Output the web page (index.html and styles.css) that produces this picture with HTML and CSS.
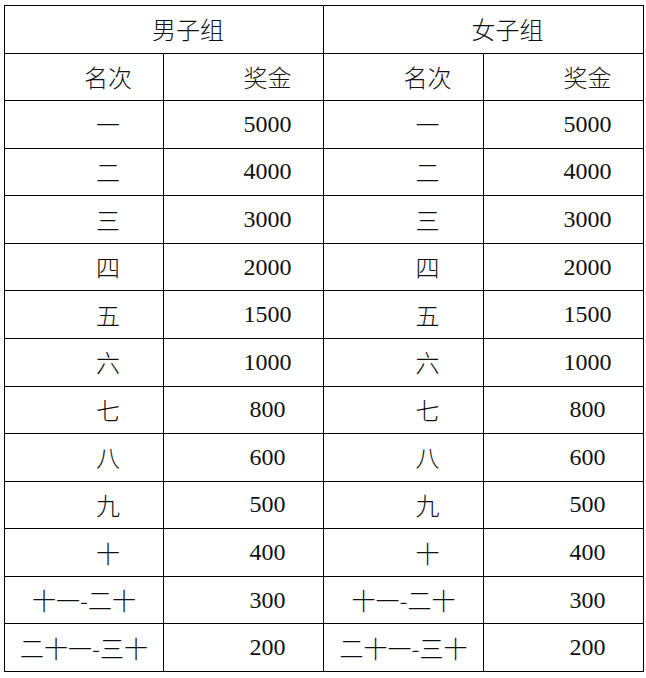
FILE: index.html
```html
<!DOCTYPE html>
<html lang="zh">
<head>
<meta charset="utf-8">
<title>奖金表</title>
<link rel="stylesheet" href="styles.css">
</head>
<body>
<div class="table">
  <div class="cell head span2 ind">男子组</div>
  <div class="cell head span2 ind">女子组</div>
  <div class="cell ind">名次</div><div class="cell ind">奖金</div><div class="cell ind">名次</div><div class="cell ind">奖金</div>
  <div class="cell ind">一</div><div class="cell ind num">5000</div><div class="cell ind">一</div><div class="cell ind num">5000</div>
  <div class="cell ind">二</div><div class="cell ind num">4000</div><div class="cell ind">二</div><div class="cell ind num">4000</div>
  <div class="cell ind">三</div><div class="cell ind num">3000</div><div class="cell ind">三</div><div class="cell ind num">3000</div>
  <div class="cell ind">四</div><div class="cell ind num">2000</div><div class="cell ind">四</div><div class="cell ind num">2000</div>
  <div class="cell ind">五</div><div class="cell ind num">1500</div><div class="cell ind">五</div><div class="cell ind num">1500</div>
  <div class="cell ind">六</div><div class="cell ind num">1000</div><div class="cell ind">六</div><div class="cell ind num">1000</div>
  <div class="cell ind">七</div><div class="cell ind num">800</div><div class="cell ind">七</div><div class="cell ind num">800</div>
  <div class="cell ind">八</div><div class="cell ind num">600</div><div class="cell ind">八</div><div class="cell ind num">600</div>
  <div class="cell ind">九</div><div class="cell ind num">500</div><div class="cell ind">九</div><div class="cell ind num">500</div>
  <div class="cell ind">十</div><div class="cell ind num">400</div><div class="cell ind">十</div><div class="cell ind num">400</div>
  <div class="cell">十一-二十</div><div class="cell ind num">300</div><div class="cell">十一-二十</div><div class="cell ind num">300</div>
  <div class="cell">二十一-三十</div><div class="cell ind num">200</div><div class="cell">二十一-三十</div><div class="cell ind num">200</div>
</div>
</body>
</html>
```
FILE: styles.css
```css
html, body {
  margin: 0;
  padding: 0;
  background: #fff;
}
body {
  padding: 5px 0 0 4px;
}
.table {
  display: grid;
  grid-template-columns: 158px 159px 159px 159px;
  grid-template-rows: repeat(14, 1fr);
  gap: 1px;
  padding: 1px;
  width: 638px;
  height: 665px;
  background: #000;
}
.cell {
  background: #fff;
  display: flex;
  align-items: center;
  justify-content: center;
  font-family: "Noto Sans CJK SC", "Liberation Serif", serif;
  font-weight: 300;
  font-size: 24px;
  line-height: 1;
  color: #111;
  white-space: nowrap;
  letter-spacing: 0;
}
.span2 {
  grid-column: span 2;
}
.ind {
  padding-left: 48px;
}
.num {
  font-family: "Liberation Serif", "Times New Roman", serif;
  font-weight: 400;
  line-height: normal;
}
```
